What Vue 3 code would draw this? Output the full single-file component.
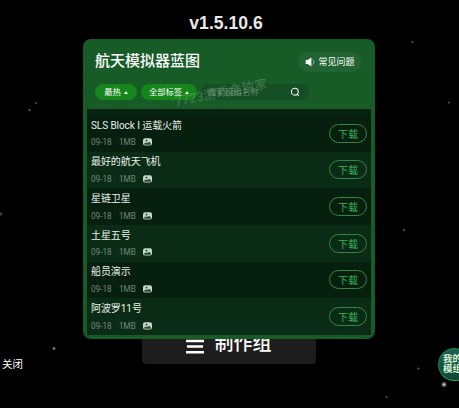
<script setup>
const items = [
  'SLS Block I 运载火箭',
  '最好的航天飞机',
  '星链卫星',
  '土星五号',
  '船员演示',
  '阿波罗11号',
]
const stars = [
  [36, 103, 0.9, 0.4], [29.5, 110, 1, 0.5], [1, 214, 1.6, 0.3], [54, 348.5, 1.4, 0.5],
  [412.5, 42, 1, 0.4], [449, 102.5, 1, 0.4], [404, 230, 1, 0.45], [418.5, 368.5, 1, 0.45],
  [386.5, 397, 1, 0.4], [444, 384.5, 2.6, 0.35], [444, 384.5, 1.2, 0.8],
]
</script>

<template>
  <main class="scene">
    <svg class="sky" viewBox="0 0 459 408">
      <circle v-for="(s, i) in stars" :key="i" :cx="s[0]" :cy="s[1]" :r="s[2]" fill="#dfe3e3" :opacity="s[3]" />
    </svg>
    <div class="version">v1.5.10.6</div>

    <section class="panel">
      <header class="head">
        <h1>航天模拟器蓝图</h1>
        <button class="faq">
          <svg width="10" height="10" viewBox="0 0 10 10">
            <path d="M.7 3H2.6L6.4 .6V9.4L2.6 7H.7Z" fill="#fff" />
            <path d="M7.5 2.6C9.5 3.5 9.5 6.5 7.5 7.4" fill="none" stroke="#a5c8ad" stroke-width=".9" />
          </svg>
          <span>常见问题</span>
        </button>
      </header>
      <div class="filters">
        <button class="chip hot"><span>最热</span><i /></button>
        <button class="chip tags"><span>全部标签</span><i /></button>
        <label class="search">
          <span>搜索模组名称</span>
          <svg width="10" height="10" viewBox="0 0 10 10" fill="none" stroke="#f0f7f1" stroke-width="1.1">
            <circle cx="4.8" cy="4.7" r="3.4" />
            <path d="M7.2 7.2L8.8 8.8" />
          </svg>
        </label>
      </div>
      <div class="list">
        <article v-for="name in items" :key="name" class="row">
          <div class="info">
            <h2>{{ name }}</h2>
            <div class="meta">
              <span class="date">09-18</span>
              <span class="size">1MB</span>
              <svg width="9" height="8" viewBox="0 0 9 8">
                <rect width="9" height="7.4" y=".2" rx="2" fill="#c6d5ca" />
                <circle cx="3.5" cy="2.6" r=".9" fill="#173c23" />
                <path d="M1 5.8L2.6 4.6L4.2 5.1L6.1 3.7L8 5.6V6.2L7.3 6.7H1.6Z" fill="#2a4c35" />
              </svg>
            </div>
          </div>
          <button class="download">下载</button>
        </article>
      </div>
      <div class="watermark">7723游戏盒独家</div>
    </section>

    <button class="credits">
      <svg width="18" height="15" viewBox="0 0 18 15" fill="#fff">
        <path d="M0 .7H18V3.2H0ZM1 6.2H17V8.7H1ZM0 11.9H18V14.4H0Z" />
      </svg>
      <span>制作组</span>
    </button>
    <div class="close">关闭</div>
    <div class="mods"><span>我的</span><span>模组</span></div>
  </main>
</template>

<style>
body {
  background: #000;
  overflow: hidden;
}
</style>

<style scoped>
.scene {
  position: relative;
  box-sizing: border-box;
  width: 459px;
  height: 408px;
  overflow: hidden;
  background: #000;
  color: #fff;
  font-family: Roboto, "Noto Sans CJK SC", sans-serif;
}
button {
  box-sizing: border-box;
  margin: 0;
  padding: 0;
  border: 0;
  color: inherit;
  font-family: inherit;
  white-space: nowrap;
}
h1, h2 {
  margin: 0;
  white-space: nowrap;
}
.sky {
  position: absolute;
  inset: 0;
  width: 459px;
  height: 408px;
}
.version {
  padding-top: 12px;
  padding-right: 7px;
  height: 22px;
  text-align: center;
  font: bold 17.6px/22px "Liberation Sans", sans-serif;
  color: #e8e8e8;
}
.panel {
  position: absolute;
  z-index: 2;
  left: 83px;
  top: 39px;
  box-sizing: border-box;
  width: 291.5px;
  height: 300px;
  padding: 0 3.5px 4px 4px;
  border-radius: 8px;
  background: #175b27;
  overflow: hidden;
}
.head {
  display: flex;
  align-items: center;
  justify-content: space-between;
  height: 45px;
  padding: 0 9px 0 8px;
}
.head h1 {
  padding-bottom: 1px;
  font-size: 15px;
  line-height: 20px;
  font-weight: 500;
}
.faq {
  display: flex;
  align-items: center;
  justify-content: center;
  gap: 3px;
  width: 64px;
  height: 20px;
  border-radius: 10px;
  background: #226334;
  font-size: 9px;
  font-weight: 400;
}
.filters {
  display: flex;
  gap: 4px;
  height: 25px;
  padding-left: 8px;
}
.chip {
  display: flex;
  align-items: center;
  justify-content: center;
  gap: 3px;
  height: 16px;
  border-radius: 8px;
  background: #15851c;
  font-size: 8.3px;
  font-weight: 400;
}
.chip span,
.search span {
  padding-bottom: 1.5px;
}
.chip i {
  border: 2px solid transparent;
  border-top: 0;
  border-bottom: 3px solid #e8f4e8;
}
.hot {
  width: 42px;
}
.tags {
  width: 56px;
}
.search {
  display: flex;
  align-items: center;
  justify-content: space-between;
  box-sizing: border-box;
  width: 108px;
  height: 16px;
  padding: 0 9px 0 7px;
  border-radius: 8px;
  background: #154d24;
  color: #5c8564;
  font-size: 8.5px;
}
.list {
  box-sizing: border-box;
  height: 226px;
  padding-top: 6px;
  background: #07230f;
}
.row {
  display: flex;
  align-items: center;
  justify-content: space-between;
  box-sizing: border-box;
  height: 36.65px;
  padding: 0 4px;
  background: #071f0f;
}
.row:nth-child(even) {
  background: #0a2c16;
}
.info {
  padding-top: 1px;
}
.row h2 {
  height: 17px;
  font-size: 10px;
  line-height: 17px;
  font-weight: 400;
  letter-spacing: -.07px;
  color: #e8f0e9;
}
.meta {
  display: flex;
  align-items: center;
  height: 17px;
  font-size: 8.2px;
  color: #72877a;
}
.date {
  width: 28px;
}
.size {
  width: 24px;
}
.download {
  width: 38px;
  height: 19px;
  border: 1px solid #2b8743;
  border-radius: 10px;
  background: transparent;
  font-size: 10px;
  line-height: 17px;
  padding-top: 1px;
  color: #36b458;
}
.watermark {
  position: absolute;
  left: 91px;
  top: 44px;
  font-size: 13px;
  line-height: 20px;
  white-space: nowrap;
  color: rgba(205, 225, 208, .27);
  transform: rotate(-11deg);
}
.credits {
  display: flex;
  align-items: flex-end;
  justify-content: center;
  gap: 10px;
  width: 174px;
  height: 44px;
  margin: 286px 0 0 142px;
  padding: 0 0 10px;
  border-radius: 4px;
  background: #1d1d1d;
  font-size: 19px;
  line-height: 20px;
  font-weight: 500;
}
.close {
  padding: 0 0 0 2px;
  margin-top: -7px;
  font-size: 10.4px;
  line-height: 16px;
}
.mods {
  position: absolute;
  left: 438px;
  top: 348px;
  box-sizing: border-box;
  display: flex;
  flex-direction: column;
  align-items: flex-start;
  justify-content: center;
  width: 33px;
  height: 33px;
  padding: 0 0 2px 4px;
  border: 1.5px solid #238748;
  border-bottom-color: #35a951;
  border-radius: 50%;
  background: linear-gradient(#216155, #0c4533);
  font-size: 9.5px;
  line-height: 10px;
  font-weight: 700;
  color: #d5f3d0;
}
.mods span {
  white-space: nowrap;
}
</style>
